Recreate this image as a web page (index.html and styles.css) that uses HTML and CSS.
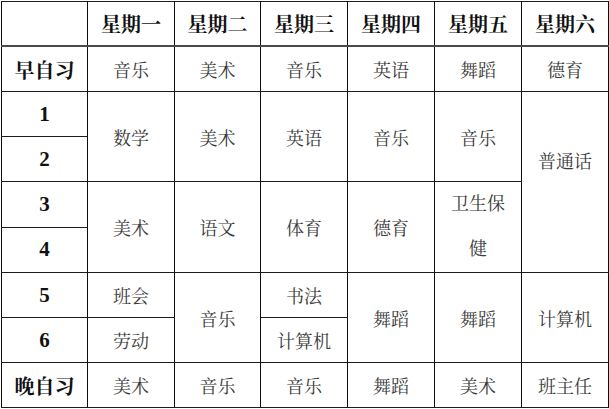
FILE: index.html
```html
<!DOCTYPE html>
<html lang="zh-CN">
<head>
<meta charset="utf-8">
<title>课程表</title>
<link rel="stylesheet" href="styles.css">
</head>
<body>
<table class="timetable">
  <colgroup>
    <col class="c0"><col class="c1"><col class="c2"><col class="c3"><col class="c4"><col class="c5"><col class="c6">
  </colgroup>
  <thead>
    <tr>
      <th class="corner"></th>
      <th>星期一</th><th>星期二</th><th>星期三</th><th>星期四</th><th>星期五</th><th>星期六</th>
    </tr>
  </thead>
  <tbody>
    <tr>
      <th class="label">早自习</th>
      <td>音乐</td><td>美术</td><td>音乐</td><td>英语</td><td>舞蹈</td><td>德育</td>
    </tr>
    <tr>
      <th class="num">1</th>
      <td rowspan="2">数学</td>
      <td rowspan="2">美术</td>
      <td rowspan="2">英语</td>
      <td rowspan="2">音乐</td>
      <td rowspan="2">音乐</td>
      <td rowspan="4" class="lift">普通话</td>
    </tr>
    <tr>
      <th class="num">2</th>
    </tr>
    <tr>
      <th class="num">3</th>
      <td rowspan="2">美术</td>
      <td rowspan="2">语文</td>
      <td rowspan="2">体育</td>
      <td rowspan="2">德育</td>
      <td rowspan="2" class="tall">卫生保<br>健</td>
    </tr>
    <tr>
      <th class="num">4</th>
    </tr>
    <tr>
      <th class="num">5</th>
      <td>班会</td>
      <td rowspan="2">音乐</td>
      <td>书法</td>
      <td rowspan="2">舞蹈</td>
      <td rowspan="2">舞蹈</td>
      <td rowspan="2">计算机</td>
    </tr>
    <tr>
      <th class="num">6</th>
      <td>劳动</td>
      <td>计算机</td>
    </tr>
    <tr>
      <th class="label">晚自习</th>
      <td>美术</td><td>音乐</td><td>音乐</td><td>舞蹈</td><td>美术</td><td>班主任</td>
    </tr>
  </tbody>
</table>
</body>
</html>
```
FILE: styles.css
```css
html, body {
  margin: 0;
  padding: 0;
  background: #ffffff;
}

body {
  padding: 1px 0 0 1px;
  font-family: "Liberation Serif", "Noto Serif CJK SC", "Noto Sans CJK SC", serif;
}

.timetable {
  border-collapse: collapse;
  table-layout: fixed;
  width: 607px;
}

.c0 { width: 86px; }
.c1 { width: 87px; }
.c2 { width: 86px; }
.c3 { width: 87px; }
.c4 { width: 87px; }
.c5 { width: 87px; }
.c6 { width: 87px; }

.timetable th,
.timetable td {
  height: 44px;
  padding: 0;
  text-align: center;
  vertical-align: middle;
  border-left: 1px solid #0d0d0d;
  border-right: 1px solid #0d0d0d;
  border-top: 1px solid #1c1c1c;
  border-bottom: 1px solid #1c1c1c;
}

.timetable thead th {
  font-size: 20px;
  font-weight: bold;
  color: #111111;
  border-bottom: 2px solid #4a4a4a;
  height: 43px;
}

.timetable td {
  font-size: 18px;
  font-weight: normal;
  color: #3a3a3a;
}

.timetable th.label {
  font-size: 20px;
  font-weight: bold;
  color: #111111;
}

.timetable th.num {
  font-size: 21px;
  font-weight: bold;
  color: #111111;
}

.timetable td.lift {
  padding-bottom: 45px;
}

.timetable td.tall {
  line-height: 45px;
}
```
